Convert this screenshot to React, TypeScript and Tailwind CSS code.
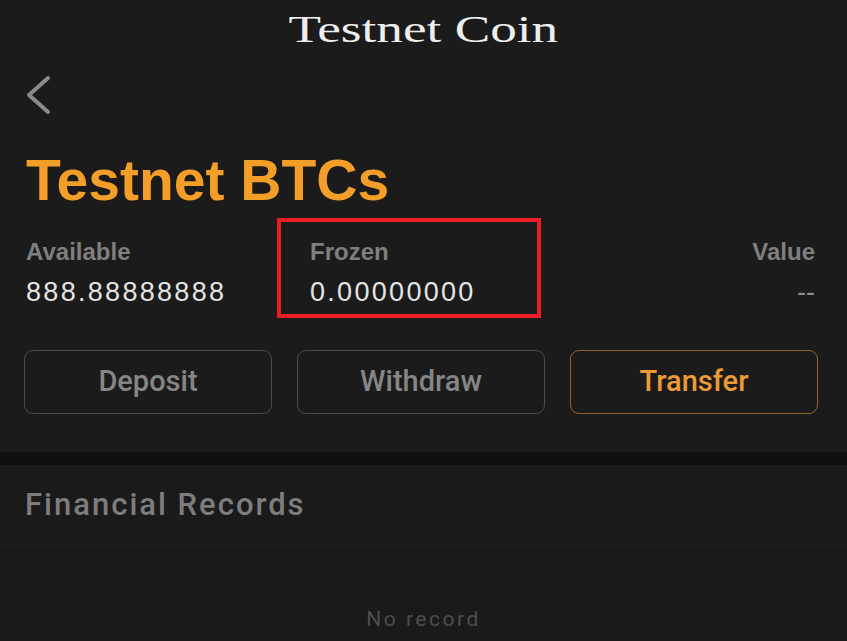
import { useState } from "react"

export default function App() {
  const [active] = useState("Transfer")

  const stats = [
    { label: "Available", value: "888.88888888" },
    { label: "Frozen", value: "0.00000000" },
    { label: "Value", value: "--" },
  ]

  const actions = ["Deposit", "Withdraw", "Transfer"]

  return (
    <div className="w-[847px] h-[641px] overflow-hidden bg-[#1b1b1b] font-['Liberation_Sans',Arial,sans-serif] flex flex-col">
      {/* Top title */}
      <div className="h-[58px] pt-[10px] flex justify-center">
        <h1 className="text-[38px] leading-[38px] text-[#eeeeee] font-['Liberation_Serif','Times_New_Roman',serif] scale-x-140 origin-center">
          Testnet Coin
        </h1>
      </div>

      {/* Back */}
      <div className="mt-[16px] pl-[24px]">
        <svg width="30" height="42" viewBox="0 0 30 42" fill="none">
          <polyline
            points="24,4 5,21 24,38"
            stroke="#8a8a8a"
            strokeWidth="4"
            strokeLinecap="round"
            strokeLinejoin="round"
          />
        </svg>
      </div>

      {/* Coin name */}
      <h2 className="mt-[36px] pl-[26px] text-[57px] leading-[57px] font-bold text-[#f39e29]">Testnet BTCs</h2>

      {/* Balances */}
      <div className="mt-[31px] flex pl-[26px] pr-[32px]">
        {stats.map((s, i) => (
          <div
            key={s.label}
            className={
              i === 0 ? "w-[284px]" : i === 1 ? "relative flex-1" : "text-right"
            }
          >
            <div className="text-[24px] leading-[24px] font-bold text-[#7f7f7f]">{s.label}</div>
            <div
              className={
                i === 2
                  ? "mt-[15px] text-[27px] leading-[27px] text-[#8a8a8a]"
                  : "mt-[15px] text-[27px] leading-[27px] tracking-[2.3px] text-[#e4e4e4]"
              }
            >
              {s.value}
            </div>
            {i === 1 && (
              <div className="absolute left-[-33px] top-[-22px] w-[264px] h-[100px] border-4 border-[#ec1c24]"></div>
            )}
          </div>
        ))}
      </div>

      {/* Actions */}
      <div className="mt-[44px] flex gap-[25px] px-[24px]">
        {actions.map((a) => (
          <button
            key={a}
            className={
              a === active
                ? "w-[248px] h-[64px] rounded-[9px] border-[1.5px] border-[#8e6332] flex items-center justify-center font-['Roboto',sans-serif] font-medium text-[29px] text-[#ec9a35]"
                : "w-[248px] h-[64px] rounded-[9px] border-[1.5px] border-[#4b4b4b] flex items-center justify-center font-['Roboto',sans-serif] font-medium text-[29px] text-[#868686]"
            }
          >
            {a}
          </button>
        ))}
      </div>

      {/* Divider band */}
      <div className="mt-[38px] h-[13px] bg-[#101010]"></div>

      {/* Records */}
      <div className="flex-1 bg-[#1a1a1a] font-['Roboto',sans-serif]">
        <div className="pt-[24px] pb-[24px] pl-[25px] border-b border-[#1f1f1f]">
          <h3 className="text-[31px] leading-[31px] font-medium tracking-[2px] text-[#7d7d7d]">Financial Records</h3>
        </div>
        <p className="mt-[64px] text-center text-[21px] leading-[21px] tracking-[2.5px] text-[#4d4d4d]">No record</p>
      </div>
    </div>
  )
}
